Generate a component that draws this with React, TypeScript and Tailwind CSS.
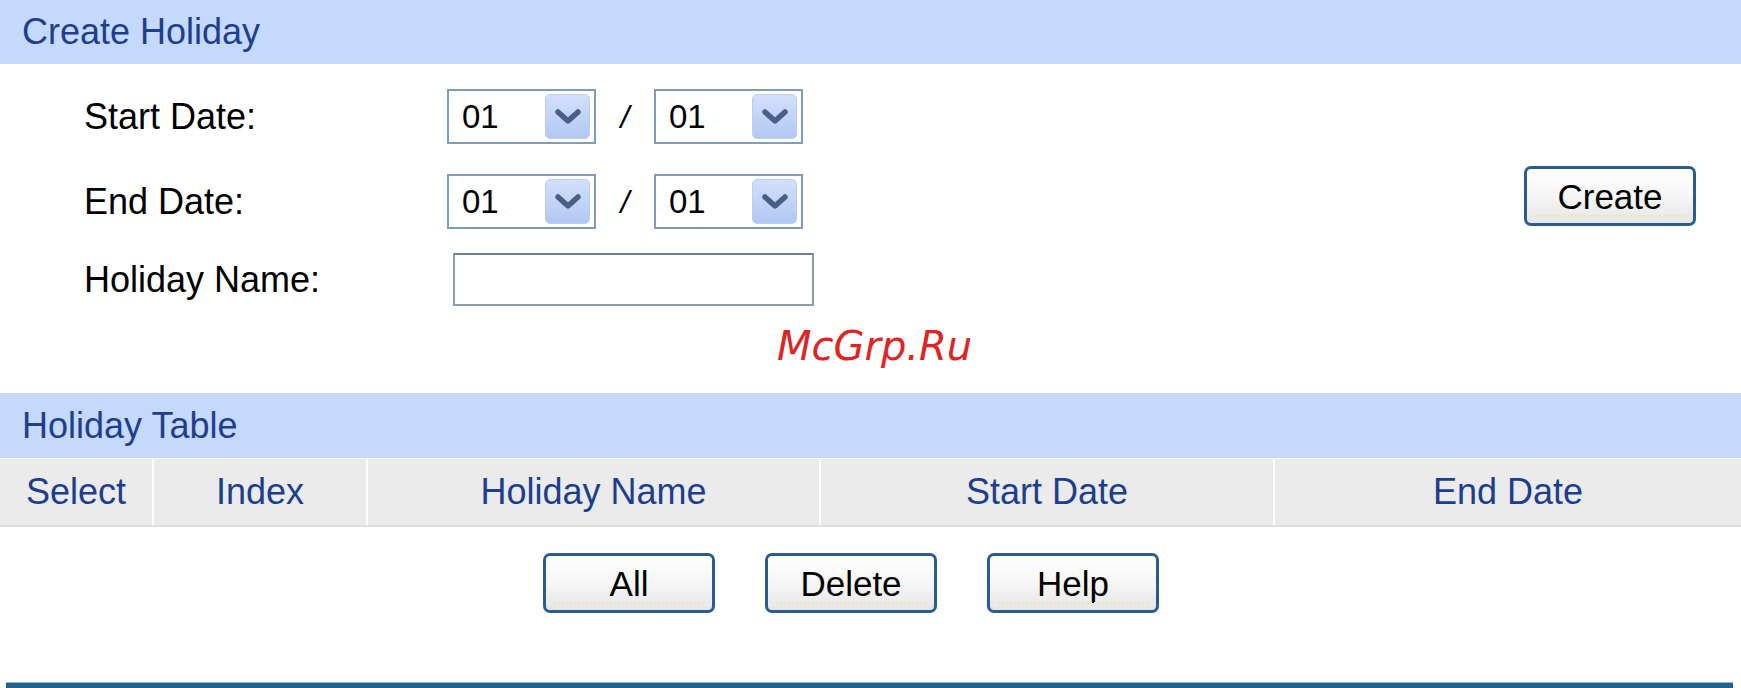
import React from "react";

function Chevron() {
  return (
    <svg width="26" height="16" viewBox="0 0 26 16" fill="none">
      <path d="M3 3 L13 12 L23 3" stroke="#4a5f86" strokeWidth="5.5" strokeLinecap="round" strokeLinejoin="round" />
    </svg>
  );
}

function Select({ value }: { value: string }) {
  return (
    <div className="w-[149px] h-[55px] border-2 border-[#7f9db9] bg-white flex items-center py-[3px] pr-[4px] pl-[13px]">
      <span className="flex-1 text-[33px] leading-none text-black">{value}</span>
      <span className="w-[45px] h-[45px] rounded-[5px] bg-linear-to-b from-[#d3e0fb] to-[#b2c7f2] border border-[#bccdef] flex items-center justify-center">
        <Chevron />
      </span>
    </div>
  );
}

function Btn({ label, className = "" }: { label: string; className?: string }) {
  return (
    <button
      className={
        "relative w-[172px] h-[60px] rounded-[7px] border-[3px] border-[#2b5c8e] bg-linear-to-b from-white via-[#f6f6f6] to-[#e6e6e6] text-[35px] leading-none text-black flex items-center justify-center " +
        className
      }
    >
      {label}
      <span className="absolute left-[8px] right-[8px] bottom-[6px] border-b-2 border-dotted border-[#f4e3a8]" />
    </button>
  );
}

export default function App() {
  return (
    <div className="w-[1741px] h-[688px] bg-white flex flex-col overflow-hidden font-['Liberation_Sans',Arial,sans-serif]">
      <div className="h-[64px] shrink-0 bg-[#c5d9fd] flex items-center pl-[22px] text-[36px] text-[#1f3f8c]">
        Create Holiday
      </div>

      <div className="h-[329px] shrink-0 flex">
        <div className="flex flex-col pt-[25px] pl-[84px]">
          <div className="h-[55px] flex items-center">
            <span className="w-[363px] text-[36px] text-black">Start Date:</span>
            <Select value="01" />
            <span className="w-[58px] text-center text-[32px] italic text-black">/</span>
            <Select value="01" />
          </div>
          <div className="h-[55px] mt-[30px] flex items-center">
            <span className="w-[363px] text-[36px] text-black">End Date:</span>
            <Select value="01" />
            <span className="w-[58px] text-center text-[32px] italic text-black">/</span>
            <Select value="01" />
          </div>
          <div className="h-[53px] mt-[24px] flex items-center">
            <span className="w-[369px] text-[36px] text-black">Holiday Name:</span>
            <input
              type="text"
              className="w-[361px] h-[53px] border-2 border-[#8d9bb0] border-t-[#6f7f96] bg-white outline-none"
            />
          </div>
          <div className="mt-[20px] pl-[693px] h-[40px] text-[40px] leading-none italic text-[#e02424] font-['DejaVu_Sans',sans-serif]">
            McGrp.Ru
          </div>
        </div>
        <div className="ml-auto mr-[45px] mt-[102px]">
          <Btn label="Create" />
        </div>
      </div>

      <div className="h-[65px] shrink-0 bg-[#c5d9fd] flex items-center pl-[22px] text-[36px] text-[#1f3f8c]">
        Holiday Table
      </div>

      <div className="mt-[1px] h-[68px] shrink-0 grid grid-cols-[152px_212px_451px_452px_1fr] gap-x-[2px] bg-white border-b-2 border-[#dedede] text-[36px] text-[#1d3e8d]">
        <div className="bg-[#ebebeb] flex items-center justify-center">Select</div>
        <div className="bg-[#ebebeb] flex items-center justify-center">Index</div>
        <div className="bg-[#ebebeb] flex items-center justify-center">Holiday Name</div>
        <div className="bg-[#ebebeb] flex items-center justify-center">Start Date</div>
        <div className="bg-[#ebebeb] flex items-center justify-center">End Date</div>
      </div>

      <div className="mt-[26px] h-[60px] shrink-0 flex pl-[543px] gap-[50px]">
        <Btn label="All" />
        <Btn label="Delete" />
        <Btn label="Help" />
      </div>

      <div className="mt-[69px] ml-[6px] w-[1727px] h-[6px] shrink-0 bg-[#24618f] border-t border-[#8fb0cc]" />
    </div>
  );
}
